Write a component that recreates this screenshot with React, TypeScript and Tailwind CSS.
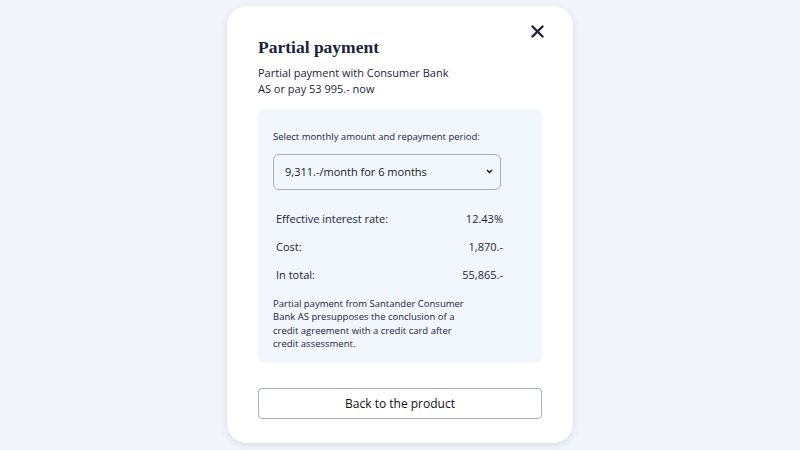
import React, { useState } from 'react';

const options = [
  '9,311.-/month for 6 months',
  '4,841.-/month for 12 months',
  '2,604.-/month for 24 months',
];

const Row = ({ label, value }: { label: string; value: string }) => (
  <div className="flex justify-between items-center h-[28px] pl-[3px] pr-[39px] text-[11px] text-[#1b2340]">
    <span>{label}</span>
    <span>{value}</span>
  </div>
);

export default function App() {
  const [plan, setPlan] = useState(options[0]);

  return (
    <div
      className="w-full min-h-screen h-[450px] bg-[#f2f5fb] flex justify-center pt-[6px]"
      style={{ fontFamily: "'Open Sans', 'DejaVu Sans', sans-serif" }}
    >
      <div className="relative w-[346px] h-[437px] bg-white rounded-[20px] shadow-[0_2px_8px_rgba(30,40,80,0.12)] px-[31px] pt-[30px]">
        {/* close */}
        <button className="absolute right-[29px] top-[19px] text-[#1b2340]">
          <svg width="13" height="13" viewBox="0 0 13 13" fill="none">
            <path d="M1.5 1.5l10 10M11.5 1.5l-10 10" stroke="currentColor" strokeWidth="2.4" strokeLinecap="round" />
          </svg>
        </button>

        <h2
          className="text-[17.5px] font-bold text-[#1b2340] leading-[22px]"
          style={{ fontFamily: "'Liberation Serif', 'DejaVu Serif', serif" }}
        >
          Partial payment
        </h2>
        <p className="mt-[7px] text-[11px] font-medium leading-[16px] text-[#1b2340] w-[200px]">
          Partial payment with Consumer Bank AS or pay 53 995.- now
        </p>

        {/* details box */}
        <div className="mt-[12px] bg-[#f2f6fd] rounded-[8px] h-[254px] pl-[15px] pt-[21px]">
          <p className="text-[9.5px] font-medium text-[#1b2340] leading-[14px]">
            Select monthly amount and repayment period:
          </p>
          <div className="relative mt-[10px] w-[228px] h-[36px]">
            <select
              value={plan}
              onChange={(e) => setPlan(e.target.value)}
              className="appearance-none w-full h-full bg-transparent border border-[#a9b0bb] rounded-[6px] pl-[11px] text-[11px] font-medium text-[#111827] outline-none"
            >
              {options.map((o) => (
                <option key={o}>{o}</option>
              ))}
            </select>
            <svg
              className="absolute right-[8px] top-[15px] pointer-events-none"
              width="7"
              height="5"
              viewBox="0 0 7 5"
              fill="none"
            >
              <path d="M1 1l2.5 2.5L6 1" stroke="#111" strokeWidth="1.4" />
            </svg>
          </div>

          <div className="mt-[15px]">
            <Row label="Effective interest rate:" value="12.43%" />
            <Row label="Cost:" value="1,870.-" />
            <Row label="In total:" value="55,865.-" />
          </div>

          <p className="mt-[8px] w-[205px] text-[9.5px] font-medium leading-[13.3px] text-[#1b2340]">
            Partial payment from Santander Consumer Bank AS presupposes the conclusion of a credit agreement with a credit card after credit assessment.
          </p>
        </div>

        <button className="mt-[25px] w-full h-[31px] border border-[#a9b0bb] rounded-[4px] bg-white text-[12px] font-medium text-[#111]">
          Back to the product
        </button>
      </div>
    </div>
  );
}
